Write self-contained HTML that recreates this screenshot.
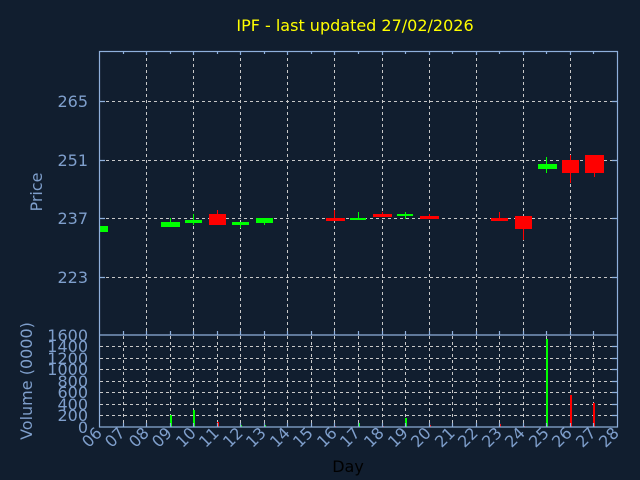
<!DOCTYPE html>
<html><head><meta charset="utf-8"><style>
html,body{margin:0;padding:0;background:#111e2f;}
svg{display:block;font-family:"DejaVu Sans","Liberation Sans",sans-serif;}
</style></head><body>
<svg width="640" height="480" viewBox="0 0 640 480" xmlns="http://www.w3.org/2000/svg">
<rect width="640" height="480" fill="#111e2f"/>
<text x="355" y="31" fill="#ffff00" font-size="16" text-anchor="middle">IPF - last updated 27/02/2026</text>
<!-- price grid -->
<g stroke="#c8c8c8" stroke-width="1" stroke-dasharray="3,3" fill="none">
<line x1="100" y1="101.5" x2="617" y2="101.5"/>
<line x1="100" y1="160.5" x2="617" y2="160.5"/>
<line x1="100" y1="218.5" x2="617" y2="218.5"/>
<line x1="100" y1="277.5" x2="617" y2="277.5"/>
<line x1="146.5" y1="52" x2="146.5" y2="334"/>
<line x1="193.5" y1="52" x2="193.5" y2="334"/>
<line x1="240.5" y1="52" x2="240.5" y2="334"/>
<line x1="287.5" y1="52" x2="287.5" y2="334"/>
<line x1="334.5" y1="52" x2="334.5" y2="334"/>
<line x1="382.5" y1="52" x2="382.5" y2="334"/>
<line x1="429.5" y1="52" x2="429.5" y2="334"/>
<line x1="476.5" y1="52" x2="476.5" y2="334"/>
<line x1="523.5" y1="52" x2="523.5" y2="334"/>
<line x1="570.5" y1="52" x2="570.5" y2="334"/>
</g>
<!-- volume grid -->
<g stroke="#c8c8c8" stroke-width="1" stroke-dasharray="3,3" fill="none">
<line x1="100" y1="346.5" x2="617" y2="346.5"/>
<line x1="100" y1="358.5" x2="617" y2="358.5"/>
<line x1="100" y1="369.5" x2="617" y2="369.5"/>
<line x1="100" y1="381.5" x2="617" y2="381.5"/>
<line x1="100" y1="392.5" x2="617" y2="392.5"/>
<line x1="100" y1="404.5" x2="617" y2="404.5"/>
<line x1="100" y1="415.5" x2="617" y2="415.5"/>
<line x1="123.5" y1="336" x2="123.5" y2="427"/>
<line x1="146.5" y1="336" x2="146.5" y2="427"/>
<line x1="170.5" y1="336" x2="170.5" y2="427"/>
<line x1="193.5" y1="336" x2="193.5" y2="427"/>
<line x1="217.5" y1="336" x2="217.5" y2="427"/>
<line x1="240.5" y1="336" x2="240.5" y2="427"/>
<line x1="264.5" y1="336" x2="264.5" y2="427"/>
<line x1="287.5" y1="336" x2="287.5" y2="427"/>
<line x1="311.5" y1="336" x2="311.5" y2="427"/>
<line x1="334.5" y1="336" x2="334.5" y2="427"/>
<line x1="358.5" y1="336" x2="358.5" y2="427"/>
<line x1="382.5" y1="336" x2="382.5" y2="427"/>
<line x1="405.5" y1="336" x2="405.5" y2="427"/>
<line x1="429.5" y1="336" x2="429.5" y2="427"/>
<line x1="452.5" y1="336" x2="452.5" y2="427"/>
<line x1="476.5" y1="336" x2="476.5" y2="427"/>
<line x1="499.5" y1="336" x2="499.5" y2="427"/>
<line x1="523.5" y1="336" x2="523.5" y2="427"/>
<line x1="546.5" y1="336" x2="546.5" y2="427"/>
<line x1="570.5" y1="336" x2="570.5" y2="427"/>
<line x1="593.5" y1="336" x2="593.5" y2="427"/>
</g>
<!-- candles -->
<g fill="#00ff00" stroke="none">
<rect x="99" y="226" width="9" height="6"/>
<rect x="170" y="218" width="1" height="5"/><rect x="161" y="222" width="19" height="5"/>
<rect x="193" y="214" width="1" height="11"/><rect x="185" y="220" width="17" height="3"/>
<rect x="240" y="222" width="1" height="6"/><rect x="232" y="222" width="17" height="3"/>
<rect x="264" y="218" width="1" height="7"/><rect x="256" y="218" width="17" height="5"/>
<rect x="358" y="212" width="1" height="7"/><rect x="350" y="218" width="16" height="2"/>
<rect x="405" y="212" width="1" height="7"/><rect x="397" y="214" width="16" height="2"/>
<rect x="546" y="157" width="1" height="16"/><rect x="538" y="164" width="19" height="5"/>
</g>
<g fill="#ff0000" stroke="none">
<rect x="217" y="210" width="1" height="5"/><rect x="209" y="214" width="17" height="11"/>
<rect x="334" y="210" width="1" height="9"/><rect x="326" y="218" width="19" height="3"/>
<rect x="382" y="212" width="1" height="3"/><rect x="373" y="214" width="19" height="3"/>
<rect x="429" y="214" width="1" height="3"/><rect x="420" y="216" width="19" height="3"/>
<rect x="499" y="212" width="1" height="7"/><rect x="491" y="218" width="17" height="3"/>
<rect x="523" y="216" width="1" height="24"/><rect x="515" y="216" width="17" height="13"/>
<rect x="570" y="155" width="1" height="28"/><rect x="562" y="160" width="17" height="13"/>
<rect x="594" y="172" width="1" height="5"/><rect x="585" y="155" width="19" height="18"/>
</g>
<!-- volume bars -->
<g fill="#00ff00">
<rect x="170" y="415" width="2" height="12"/>
<rect x="193" y="410" width="2" height="17"/>
<rect x="240" y="425" width="2" height="2"/>
<rect x="264" y="425" width="2" height="2"/>
<rect x="358" y="423" width="2" height="4"/>
<rect x="405" y="418" width="2" height="9"/>
<rect x="546" y="339" width="2" height="88"/>
</g>
<g fill="#ff0000">
<rect x="217" y="422" width="2" height="5"/>
<rect x="334" y="426" width="2" height="1"/>
<rect x="382" y="426" width="2" height="1"/>
<rect x="429" y="425" width="2" height="2"/>
<rect x="499" y="424" width="2" height="3"/>
<rect x="523" y="426" width="2" height="1"/>
<rect x="570" y="395" width="2" height="32"/>
<rect x="593" y="403" width="2" height="24"/>
</g>
<!-- axes -->
<g stroke="#8fb0dc" stroke-width="1.2" fill="none">
<rect x="99.5" y="51.5" width="518" height="375.5"/>
<line x1="99.5" y1="335" x2="617.5" y2="335"/>
<path d="M99 101.5h6M99 160.5h6M99 218.5h6M99 277.5h6M612 101.5h6M612 160.5h6M612 218.5h6M612 277.5h6"/>
<path d="M123.5 51v3M146.5 51v4M170.5 51v3M193.5 51v4M217.5 51v3M240.5 51v4M264.5 51v3M287.5 51v4M311.5 51v3M334.5 51v4M358.5 51v3M382.5 51v4M405.5 51v3M429.5 51v4M452.5 51v3M476.5 51v4M499.5 51v3M523.5 51v4M546.5 51v3M570.5 51v4M593.5 51v3"/>
<path d="M123.5 331v4M146.5 331v4M170.5 331v4M193.5 331v4M217.5 331v4M240.5 331v4M264.5 331v4M287.5 331v4M311.5 331v4M334.5 331v4M358.5 331v4M382.5 331v4M405.5 331v4M429.5 331v4M452.5 331v4M476.5 331v4M499.5 331v4M523.5 331v4M546.5 331v4M570.5 331v4M593.5 331v4"/>
<path d="M123.5 423v4M146.5 423v4M170.5 423v4M193.5 423v4M217.5 423v4M240.5 423v4M264.5 423v4M287.5 423v4M311.5 423v4M334.5 423v4M358.5 423v4M382.5 423v4M405.5 423v4M429.5 423v4M452.5 423v4M476.5 423v4M499.5 423v4M523.5 423v4M546.5 423v4M570.5 423v4M593.5 423v4"/>
<path d="M612 346.5h6M612 358.5h6M612 369.5h6M612 381.5h6M612 392.5h6M612 404.5h6M612 415.5h6"/>
</g>
<!-- price labels -->
<g fill="#7f9fcc" font-size="16" text-anchor="end">
<text x="88" y="107">265</text>
<text x="88" y="166">251</text>
<text x="88" y="224">237</text>
<text x="88" y="283">223</text>
</g>
<g fill="#7f9fcc" font-size="16" text-anchor="end">
<text x="88" y="341">1600</text>
<text x="88" y="352">1400</text>
<text x="88" y="364">1200</text>
<text x="88" y="375">1000</text>
<text x="88" y="387">800</text>
<text x="88" y="398">600</text>
<text x="88" y="410">400</text>
<text x="88" y="421">200</text>
<text x="88" y="433">0</text>
</g>
<text transform="translate(42,192) rotate(-90)" fill="#7f9fcc" font-size="16" text-anchor="middle">Price</text>
<text transform="translate(32,381) rotate(-90)" fill="#7f9fcc" font-size="16" text-anchor="middle">Volume (0000)</text>
<!-- day labels -->
<g fill="#7f9fcc" font-size="16" text-anchor="end">
<text transform="translate(103,434) rotate(-45)">06</text>
<text transform="translate(126,434) rotate(-45)">07</text>
<text transform="translate(150,434) rotate(-45)">08</text>
<text transform="translate(173,434) rotate(-45)">09</text>
<text transform="translate(197,434) rotate(-45)">10</text>
<text transform="translate(220,434) rotate(-45)">11</text>
<text transform="translate(244,434) rotate(-45)">12</text>
<text transform="translate(267,434) rotate(-45)">13</text>
<text transform="translate(291,434) rotate(-45)">14</text>
<text transform="translate(314,434) rotate(-45)">15</text>
<text transform="translate(338,434) rotate(-45)">16</text>
<text transform="translate(361,434) rotate(-45)">17</text>
<text transform="translate(385,434) rotate(-45)">18</text>
<text transform="translate(409,434) rotate(-45)">19</text>
<text transform="translate(432,434) rotate(-45)">20</text>
<text transform="translate(456,434) rotate(-45)">21</text>
<text transform="translate(479,434) rotate(-45)">22</text>
<text transform="translate(503,434) rotate(-45)">23</text>
<text transform="translate(526,434) rotate(-45)">24</text>
<text transform="translate(550,434) rotate(-45)">25</text>
<text transform="translate(573,434) rotate(-45)">26</text>
<text transform="translate(597,434) rotate(-45)">27</text>
<text transform="translate(620,434) rotate(-45)">28</text>
</g>
<text x="348" y="472" fill="#000000" font-size="16" text-anchor="middle">Day</text>
</svg>
</body></html>
